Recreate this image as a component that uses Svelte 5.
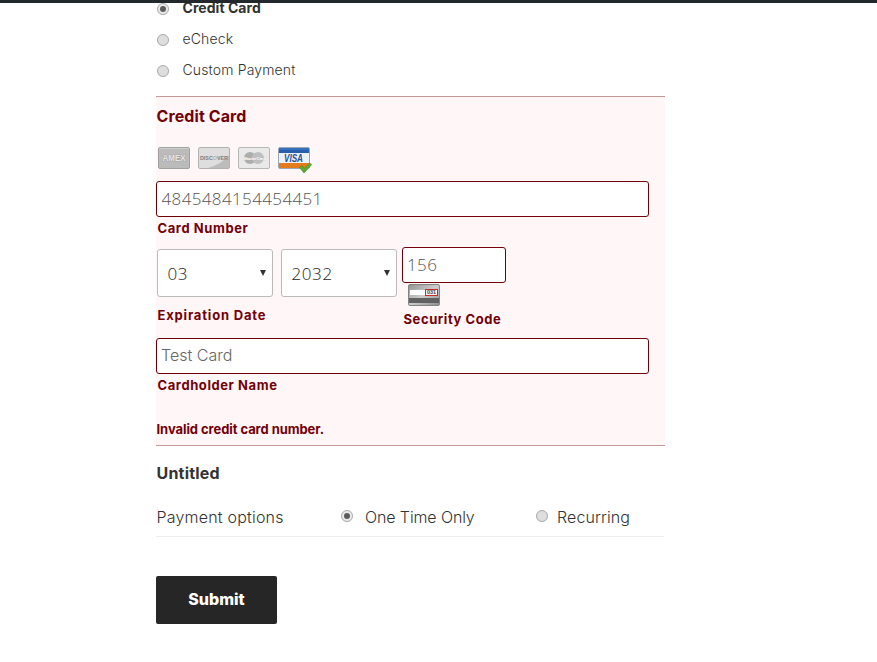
<script>
  let method = $state('Credit Card');
  let schedule = $state('One Time Only');
  const methods = ['Credit Card', 'eCheck', 'Custom Payment'];
</script>

{#snippet radio(on)}
  <svg class="radio" width="14" height="14" viewBox="0 0 14 14">
    <circle cx="7" cy="7.3" r="6" fill="#00000018" />
    <circle cx="7" cy="7" r="5.5" fill={on ? '#eaeaea' : '#dedede'} stroke="#acacac" />
    {#if on}<circle cx="7" cy="7" r="3" fill="#5c5c5c" />{/if}
  </svg>
{/snippet}

<div class="topbar"></div>
<main>
  <div class="methods">
    {#each methods as m}
      <button class="option" class:bold={method === m} onclick={() => (method = m)}>
        {@render radio(method === m)}<span>{m}</span>
      </button>
    {/each}
  </div>

  <section class="card">
    <h2>Credit Card</h2>
    <div class="brands">
      <svg width="32" height="22" viewBox="0 0 32 22">
        <rect x=".5" y=".5" width="31" height="21" rx="1.5" fill="#bbb" stroke="#a1a1a1" />
        <path d="M1.5 1.5h29" stroke="#d0d0d0" />
        <text x="4.5" y="14" textLength="23" lengthAdjust="spacingAndGlyphs" font-size="8.5" font-weight="700" fill="#e6e6e6" stroke="#999" stroke-width=".7" paint-order="stroke">AMEX</text>
      </svg>
      <svg width="32" height="22" viewBox="0 0 32 22">
        <rect x=".5" y=".5" width="31" height="21" rx="1.5" fill="#dedede" stroke="#b2b2b2" />
        <path d="M31 8v13H10Q24 17 31 8Z" fill="#bcbcbc" />
        <text x="2" y="13" textLength="28" lengthAdjust="spacingAndGlyphs" font-size="6" font-weight="700" fill="#7d7d7d">DISC<tspan fill="#b5b5b5">O</tspan>VER</text>
      </svg>
      <svg width="32" height="22" viewBox="0 0 32 22">
        <rect x=".5" y=".5" width="31" height="21" rx="1.5" fill="#e9e9e9" stroke="#b7b7b7" />
        <circle cx="12" cy="11" r="6" fill="#adadad" /><circle cx="20" cy="11" r="6" fill="#bfbfbf" />
        <text x="5" y="13" font-size="4.2" font-weight="700" font-style="italic" fill="#fff" stroke="#bbb" stroke-width=".3" paint-order="stroke">MasterCard</text>
      </svg>
      <svg width="34" height="27" viewBox="0 0 34 27">
        <rect x=".5" y=".5" width="31" height="21" rx="1.5" fill="#edf1f7" stroke="#9aa5b8" />
        <path d="M1 1h30v5H1Z" fill="#265eae" /><path d="M1 2h30" stroke="#4b80c5" />
        <path d="M1 16h30v5H1Z" fill="#e47c1d" />
        <text x="6" y="14.7" textLength="19" lengthAdjust="spacingAndGlyphs" font-size="10" font-weight="700" font-style="italic" fill="#244f96">VISA</text>
        <path d="m21.5 20.5 2.5-2 2.5 3 5-5.5 2.3 1.5-7.8 8.5Z" fill="#5eaa32" stroke="#438f22" stroke-width=".6" />
      </svg>
    </div>
    <input class="wide digits" value="4845484154454451" aria-label="Card Number" />
    <div class="label number">Card Number</div>
    <div class="details">
      <div class="expiry">
        <div class="selects">
          <div class="select"><span>03</span><i></i></div>
          <div class="select"><span>2032</span><i></i></div>
        </div>
        <div class="label">Expiration Date</div>
      </div>
      <div class="security">
        <input class="digits" value="156" aria-label="Security Code" />
        <svg width="32" height="22" viewBox="0 0 32 22">
          <defs><linearGradient id="metal" x2="1" y2="1"><stop stop-color="#909090" /><stop offset=".5" stop-color="#ccc" /><stop offset="1" stop-color="#8c8c8c" /></linearGradient></defs>
          <rect x=".5" y=".5" width="31" height="21" rx="1.5" fill="url(#metal)" stroke="#858585" />
          <path d="M1 14h30v5H1Z" fill="#626262" /><path d="M2 6h16v5H2Z" fill="#fff" />
          <rect x="17.5" y="5.5" width="12" height="6" fill="#f5f5f5" stroke="#c52b2b" />
          <text x="19" y="10.3" textLength="9" lengthAdjust="spacingAndGlyphs" font-size="5" font-weight="700" fill="#444">031</text>
        </svg>
        <div class="label">Security Code</div>
      </div>
    </div>
    <input class="wide name" value="Test Card" aria-label="Cardholder Name" />
    <div class="label holder">Cardholder Name</div>
    <p class="error">Invalid credit card number.</p>
  </section>

  <h3>Untitled</h3>
  <div class="schedule">
    <span class="caption">Payment options</span>
    <button class="once" onclick={() => (schedule = 'One Time Only')}>{@render radio(schedule === 'One Time Only')}<span>One Time Only</span></button>
    <button class="recurring" onclick={() => (schedule = 'Recurring')}>{@render radio(schedule === 'Recurring')}<span>Recurring</span></button>
  </div>
  <button class="submit">Submit</button>
</main>

<style>
  :global(body) { background: #fff; overflow: hidden; }
  * { box-sizing: border-box; }
  .topbar { height: 3px; background: #23282d; position: relative; z-index: 1; }
  main { width: 509px; margin-left: 156px; color: #333; font-family: Inter, sans-serif; font-weight: 300; }
  button { border: 0; background: none; padding: 0; font: inherit; color: inherit; text-align: left; white-space: nowrap; }
  svg { display: block; flex: none; }
  svg text { font-family: "Liberation Sans", sans-serif; }
  .methods { margin-top: -10px; height: 103px; }
  .option { display: flex; align-items: center; height: 31px; font-size: 14px; letter-spacing: .15px; }
  .option .radio { margin: 1px 12.5px 0 0; }
  .option span { margin-top: -3px; }
  .option.bold { font-weight: 700; letter-spacing: .05px; }
  .card { height: 350px; background: #fff6f7; border-top: 1px solid #c89797; border-bottom: 1px solid #c89797; color: #730008; }
  h2, h3 { margin: 0; padding-left: .5px; font-size: 16px; line-height: 20px; font-weight: 700; letter-spacing: .1px; }
  h2 { padding-top: 9px; height: 50px; }
  .brands { display: flex; gap: 8px; padding-left: 2px; height: 34px; }
  input { display: block; height: 36px; border: 1px solid #730008; border-radius: 3px; background: #fff; color: #666; padding: 0 5px 2px; font: 300 16px Inter, sans-serif; outline: 0; }
  .wide { width: 493px; }
  .name { padding-left: 4px; }
  .digits { font-family: "Open Sans", sans-serif; font-size: 17px; font-weight: 300; letter-spacing: .37px; padding-left: 4.5px; color: #555; }
  .label { padding-left: 1.5px; font-size: 13px; line-height: 16px; font-weight: 700; letter-spacing: .58px; white-space: nowrap; }
  .number { height: 30px; padding-top: 3px; }
  .details { display: flex; height: 91px; }
  .expiry { width: 246px; padding: 2px 0 0 1px; }
  .expiry .label { padding: 10px 0 0 .5px; letter-spacing: .82px; }
  .selects { display: flex; gap: 8px; }
  .select { width: 116px; height: 48px; border: 1px solid #bbb; border-radius: 3px; background: #fff; color: #222; display: flex; align-items: center; justify-content: space-between; padding: 0 6px 0 9.5px; font: 300 17px "Open Sans", sans-serif; letter-spacing: .6px; }
  .select i { width: 6px; height: 6px; background: #333; clip-path: polygon(0 0, 100% 0, 50% 100%); }
  .security input { width: 104px; padding-left: 4px; }
  .security svg { margin: 1px 0 0 6px; }
  .security .label { padding-top: 5px; }
  .holder { padding-top: 3px; height: 47px; }
  .error { margin: 0; padding-left: .5px; font-size: 13px; line-height: 16px; font-weight: 700; letter-spacing: -.07px; }
  h3 { padding-top: 17px; height: 52px; letter-spacing: .2px; }
  .schedule { width: 508px; height: 39px; border-bottom: 1px solid #eee; display: flex; align-items: center; font-size: 16px; }
  .schedule .caption { width: 184px; padding-left: .5px; letter-spacing: .2px; }
  .schedule button { display: flex; align-items: center; }
  .schedule .once { width: 195px; letter-spacing: -.12px; }
  .schedule .radio { margin: -2px 11px 0 0; }
  .schedule .recurring { letter-spacing: .1px; }
  .schedule .recurring .radio { margin-right: 8px; }
  .submit { display: block; width: 121px; height: 48px; margin-top: 39px; padding-bottom: 2px; border-radius: 2px; background: #262626; color: #fff; font-size: 16px; font-weight: 800; text-align: center; }
</style>
